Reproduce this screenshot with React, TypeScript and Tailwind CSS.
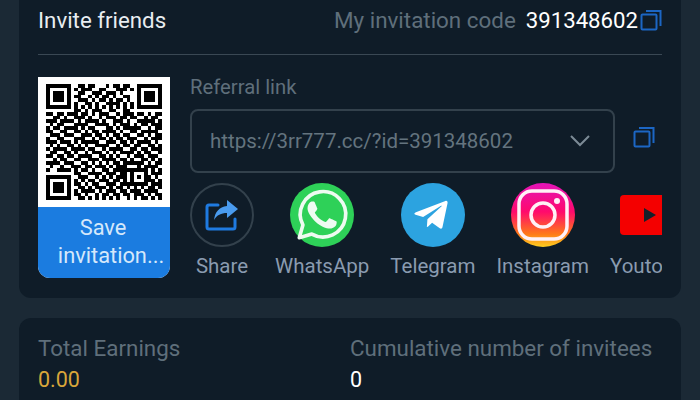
import { FaTelegramPlane } from "react-icons/fa"

const qrRows = [
  "111111100110110001011011001111111",
  "100000101011100110001110101000001",
  "101110100110011101110100001011101",
  "101110101100101011010011001011101",
  "101110100111010110101101001011101",
  "100000101001101001111010101000001",
  "111111101010101010101010101111111",
  "000000001101011100110011000000000",
  "110110111011010111001011101101011",
  "001101001110100101110110110010110",
  "111011110101111010011101001111101",
  "010110001111001111010111010110111",
  "101101111010110001101011111001011",
  "110011001101011011110100110111110",
  "011101110011101101011011001101011",
  "100110001110010110101101110010111",
  "111011101011111001110110101111010",
  "010100110101001111001011011001101",
  "101111011110110010111100110110111",
  "011001101001011101010111101011001",
  "110110110111100110101001011101110",
  "001011001100111011110110100110101",
  "111101110011010101011011111101011",
  "010010011101101110101110001011110",
  "100111101011010011011111111110101",
  "000000001100111101110110100010111",
  "111111100111001010101110101011010",
  "100000101010110111011010100011101",
  "101110101101011001110111111110111",
  "101110100110101110101101010101101",
  "101110101011110101110110111011110",
  "100000101101001011011011011101011",
  "111111100110101010101001010110101",
]

function QrCode() {
  return (
    <svg width="116" height="116" viewBox="0 0 33 33" shapeRendering="crispEdges">
      {qrRows.map((row, y) =>
        row.split("").map((cell, x) => (cell === "1" ? <rect key={`${x}-${y}`} x={x} y={y} width="1" height="1" fill="#000" /> : null)),
      )}
    </svg>
  )
}

function CopyIcon({ size }: { size: number }) {
  return (
    <svg width={size} height={size} viewBox="0 0 22 22" fill="none" stroke="#1c66c4" strokeWidth="2">
      <rect x="1.5" y="5.5" width="15" height="15" rx="1" />
      <path d="M6 2h14.5v15" />
    </svg>
  )
}

function ShareIcon() {
  return (
    <svg width="36" height="34" viewBox="0 0 36 34" fill="none">
      <path d="M14 7H5a2 2 0 0 0-2 2v20a2 2 0 0 0 2 2h24a2 2 0 0 0 2-2v-8" stroke="#1f7ae0" strokeWidth="3" strokeLinecap="round" />
      <path d="M23 2l11 9-11 9v-5c-6 0-10 2-13 7 1-8 5-13 13-14z" fill="#4a9bee" />
    </svg>
  )
}

function WhatsAppIcon() {
  return (
    <svg width="58" height="58" viewBox="0 0 24 24" fill="none">
      <path d="M2.6 21.4l1.5-5.3a9.4 9.4 0 1 1 3.7 3.8z" stroke="#eefbf1" strokeWidth="1.5" strokeLinejoin="round" />
      <path
        fill="#eefbf1"
        d="M17.472 14.382c-.297-.149-1.758-.867-2.03-.967-.273-.099-.471-.148-.67.15-.197.297-.767.966-.94 1.164-.173.199-.347.223-.644.075-.297-.15-1.255-.463-2.39-1.475-.883-.788-1.48-1.761-1.653-2.059-.173-.297-.018-.458.13-.606.134-.133.298-.347.446-.52.149-.174.198-.298.298-.497.099-.198.05-.371-.025-.52-.075-.149-.669-1.612-.916-2.207-.242-.579-.487-.5-.669-.51-.173-.008-.371-.01-.57-.01-.198 0-.52.074-.792.372-.272.297-1.04 1.016-1.04 2.479 0 1.462 1.065 2.875 1.213 3.074.149.198 2.096 3.2 5.077 4.487.709.306 1.262.489 1.694.625.712.227 1.36.195 1.871.118.571-.085 1.758-.719 2.006-1.413.248-.694.248-1.289.173-1.413-.074-.124-.272-.198-.57-.347z"
      />
    </svg>
  )
}

function InstagramIcon() {
  return (
    <svg width="64" height="64" viewBox="0 0 64 64" fill="none" stroke="#fff1f6" strokeWidth="3.5">
      <rect x="8" y="8" width="48" height="48" rx="13" />
      <circle cx="32" cy="32" r="12" />
      <circle cx="46" cy="18" r="3" fill="#fff1f6" stroke="none" />
    </svg>
  )
}

type ChannelProps = {
  label: string
  children: React.ReactNode
}

function Channel({ label, children }: ChannelProps) {
  return (
    <div className="flex shrink-0 flex-col items-center">
      <div className="flex h-16 items-center justify-center">{children}</div>
      <span className="mt-[6px] text-[20.5px] leading-[26px] text-[#8a9bb0]">{label}</span>
    </div>
  )
}

export default function App() {
  return (
    <div className="h-[400px] w-[700px] overflow-hidden bg-[#1b2935] px-[19px] font-['Roboto',sans-serif]">
      <div className="h-[298px] rounded-b-xl bg-[#0f1c28] px-[19px]">
        <div className="flex h-[55px] items-center justify-between border-b border-[#3a4854] pb-[13px]">
          <span className="text-[22.3px] text-[#e8edf1]">Invite friends</span>
          <div className="flex items-center">
            <span className="text-[22.4px] text-[#5f6f7b]">My invitation code</span>
            <span className="ml-[10px] text-[22.2px] text-white">391348602</span>
            <span className="ml-[2px]">
              <CopyIcon size={22} />
            </span>
          </div>
        </div>

        <div className="mt-[22px] flex">
          <div className="h-[201px] w-[132px] shrink-0 overflow-hidden rounded-b-xl bg-white">
            <div className="flex h-[130px] items-center justify-center">
              <QrCode />
            </div>
            <div className="flex h-[71px] flex-col items-center justify-center bg-[#1b7ce0] pb-[2px] text-[21.8px] leading-[28px] text-[#d5e8fb]">
              <span className="mr-[2px]">Save</span>
              <span className="ml-[14px]">invitation...</span>
            </div>
          </div>

          <div className="ml-5 min-w-0 flex-1">
            <div className="text-[20.3px] leading-[20px] text-[#5f6f7b]">Referral link</div>
            <div className="mt-[12px] flex items-center">
              <div className="flex h-[64px] w-[425px] items-center justify-between rounded-lg border-2 border-[#33414c] pl-[18px] pr-[23px]">
                <span className="text-[20.5px] text-[#64747f]">https://3rr777.cc/?id=391348602</span>
                <svg width="20" height="12" viewBox="0 0 20 12" fill="none" stroke="#7c8b96" strokeWidth="2">
                  <path d="M1 1l9 9 9-9" />
                </svg>
              </div>
              <span className="mb-[8px] ml-[18px]">
                <CopyIcon size={22} />
              </span>
            </div>
            <div className="mt-[10px] flex gap-[21px] overflow-hidden">
              <div className="flex w-16 shrink-0 flex-col items-center">
                <div className="flex h-16 w-16 items-center justify-center rounded-full border-2 border-[#33414c]">
                  <ShareIcon />
                </div>
                <span className="mt-[6px] text-[20.5px] leading-[26px] text-[#8a9bb0]">Share</span>
              </div>
              <Channel label="WhatsApp">
                <div className="flex h-16 w-16 items-center justify-center rounded-full bg-[#2ed158]">
                  <WhatsAppIcon />
                </div>
              </Channel>
              <Channel label="Telegram">
                <div className="flex h-16 w-16 items-center justify-center rounded-full bg-[#2ca3e0] pr-1">
                  <FaTelegramPlane size={38} className="text-white" />
                </div>
              </Channel>
              <Channel label="Instagram">
                <div className="flex h-16 w-16 items-center justify-center rounded-full bg-[linear-gradient(to_bottom,#e414b8_0%,#ff0a6c_45%,#ff7a18_80%,#ffd020_100%)]">
                  <InstagramIcon />
                </div>
              </Channel>
              <div className="flex w-[52px] shrink-0 flex-col items-start">
                <div className="flex h-16 items-center pl-[10px]">
                  <div className="flex h-10 w-[56px] shrink-0 items-center justify-center rounded-[4px] bg-[#f40000] pl-1">
                    <svg width="16" height="18" viewBox="0 0 16 18">
                      <path d="M2 2l12 7-12 7z" fill="#14202a" />
                    </svg>
                  </div>
                </div>
                <span className="mt-[6px] text-[20.5px] leading-[26px] text-[#8a9bb0]">Youto</span>
              </div>
            </div>
          </div>
        </div>
      </div>

      <div className="mt-5 grid h-[120px] grid-cols-2 rounded-t-xl bg-[#0f1c28] px-[19px] pt-[16px]">
        <div>
          <div className="text-[22.4px] leading-[28px] text-[#5f6f7b]">Total Earnings</div>
          <div className="mt-1 text-[21.5px] leading-[28px] text-[#d9a63a]">0.00</div>
        </div>
        <div>
          <div className="text-[22.4px] leading-[28px] text-[#5f6f7b]">Cumulative number of invitees</div>
          <div className="mt-1 text-[21.5px] leading-[28px] text-white">0</div>
        </div>
      </div>
    </div>
  )
}
